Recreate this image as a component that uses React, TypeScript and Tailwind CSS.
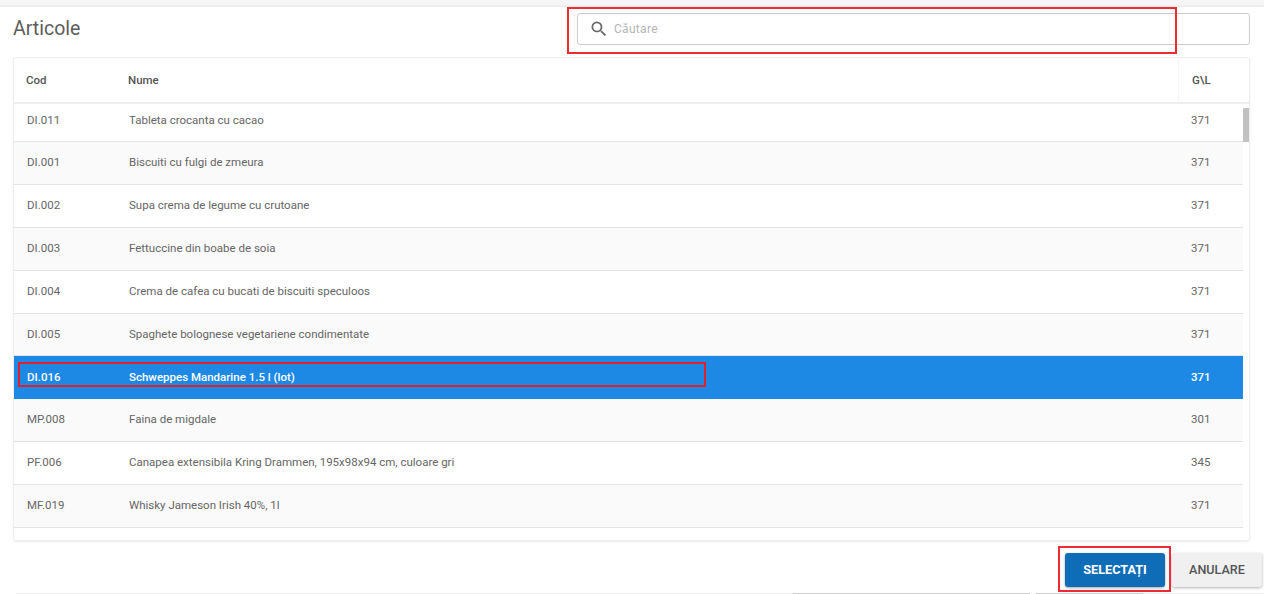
import { MdSearch } from "react-icons/md";

const rows = [
    { cod: "DI.011", nume: "Tableta crocanta cu cacao", gl: "371", h: "h-[38px] pb-[3px]" },
    { cod: "DI.001", nume: "Biscuiti cu fulgi de zmeura", gl: "371", h: "h-[43px]" },
    { cod: "DI.002", nume: "Supa crema de legume cu crutoane", gl: "371", h: "h-[43px]" },
    { cod: "DI.003", nume: "Fettuccine din boabe de soia", gl: "371", h: "h-[43px]" },
    { cod: "DI.004", nume: "Crema de cafea cu bucati de biscuiti speculoos", gl: "371", h: "h-[43px]" },
    { cod: "DI.005", nume: "Spaghete bolognese vegetariene condimentate", gl: "371", h: "h-[42px]" },
    { cod: "DI.016", nume: "Schweppes Mandarine 1.5 l (lot)", gl: "371", h: "h-[43px]", selected: true },
    { cod: "MP.008", nume: "Faina de migdale", gl: "301", h: "h-[43px]" },
    { cod: "PF.006", nume: "Canapea extensibila Kring Drammen, 195x98x94 cm, culoare gri", gl: "345", h: "h-[43px]" },
    { cod: "MF.019", nume: "Whisky Jameson Irish 40%, 1l", gl: "371", h: "h-[43px]" },
];

export default function App() {
    return (
        <div className="relative w-[1264px] h-[594px] overflow-hidden bg-white font-['Roboto',sans-serif]">
            {/* fasia de sus */}
            <div className="h-[7px] bg-[#f6f6f6] border-b-2 border-[#eeeeee]" />

            {/* titlu + cautare */}
            <div className="flex items-start justify-between h-[50px] pl-[13px] pr-[14px] pt-[6px]">
                <h2 className="text-[19.5px] leading-[32px] text-[#5c5c5c]">Articole</h2>
                <div className="flex items-center w-[673px] h-[32px] pl-[11px] rounded-[3px] border border-[#cccccc]">
                    <MdSearch className="w-[20px] h-[20px] text-[#666666] mr-[5px]" />
                    <span className="text-[12px] text-[#b5b5b5] tracking-[0.3px]">Căutare</span>
                </div>
            </div>

            {/* tabel */}
            <div className="mx-[13px] w-[1237px] h-[484px] rounded-[3px] border border-[#eeeeee] shadow-[0_1px_2px_rgba(0,0,0,0.08)]">
                <div className="flex items-center h-[46px] border-b-2 border-[#eeeeee] text-[11.5px] font-medium text-[#555555]">
                    <span className="w-[114px] pl-[12px] pt-[2px]">Cod</span>
                    <span className="flex-1 pt-[2px]">Nume</span>
                    <span className="w-[71px] h-full flex items-center pl-[13px] pt-[2px] border-l border-[#f5f5f5]">G\L</span>
                </div>
                <div className="flex">
                    <div className="w-[1229px]">
                        {rows.map((r, i) => (
                            <div
                                key={r.cod}
                                className={`flex items-center text-[11.5px] ${r.h} ${
                                    r.selected
                                        ? "bg-[#1e88e5] text-white font-medium"
                                        : `border-b border-[#e3e3e3] text-[#666666] ${i % 2 === 1 ? "bg-[#fafafa]" : "bg-white"}`
                                }`}
                            >
                                <span className="w-[115px] pl-[13px]">{r.cod}</span>
                                <span className="flex-1">{r.nume}</span>
                                <span className="w-[52px]">{r.gl}</span>
                            </div>
                        ))}
                    </div>
                    <div className="w-[6px] pt-[4px]">
                        <div className="h-[34px] bg-[#c1c1c1]" />
                    </div>
                </div>
            </div>

            {/* butoane */}
            <div className="flex justify-end gap-[7px] mt-[12px] pr-[2px]">
                <button className="w-[100px] h-[34px] rounded-[3px] bg-[#0f6cb6] text-white text-[12.7px] font-bold shadow-[0_1px_3px_rgba(0,0,0,0.35)]">
                    SELECTAȚI
                </button>
                <button className="w-[90px] h-[34px] rounded-[3px] bg-[#f0f0f0] text-[#555555] text-[12.6px] font-medium shadow-[0_1px_3px_rgba(0,0,0,0.3)]">
                    ANULARE
                </button>
            </div>

            {/* linia de jos */}
            <div className="flex mt-[6px] ml-[16px] h-px">
                <div className="w-[777px] bg-[#ececec]" />
                <div className="w-[237px] bg-[#cccccc]" />
                <div className="w-[6px]" />
                <div className="w-[107px] bg-[#cccccc]" />
                <div className="flex-1 bg-[#ececec]" />
            </div>

            {/* marcaje rosii */}
            <div className="absolute left-[567px] top-[7px] w-[610px] h-[47px] border-2 border-[#ee2a35] pointer-events-none" />
            <div className="absolute left-[18px] top-[362px] w-[688px] h-[25px] border-2 border-[#e0202c] pointer-events-none" />
            <div className="absolute left-[1058px] top-[546px] w-[113px] h-[46px] border-2 border-[#ee2a35] pointer-events-none" />
        </div>
    );
}
